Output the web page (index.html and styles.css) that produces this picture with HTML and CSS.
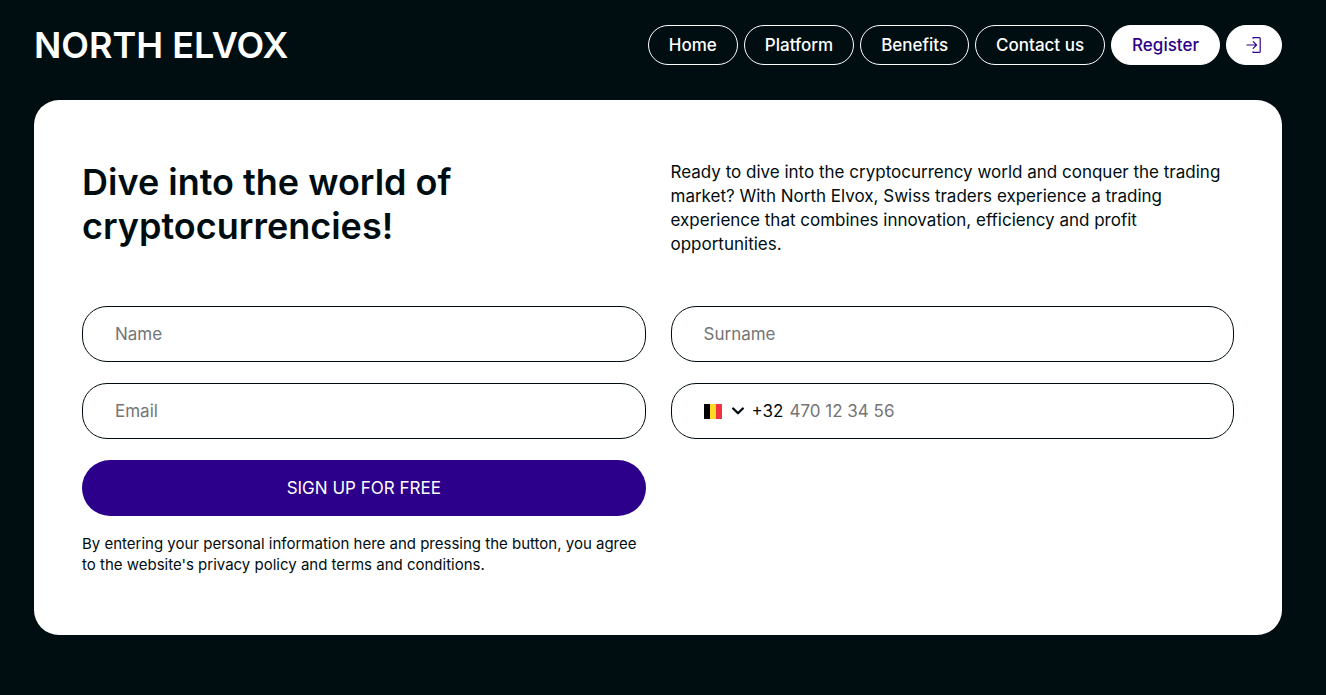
FILE: index.html
```html
<!DOCTYPE html>
<html lang="en">
<head>
  <meta charset="UTF-8">
  <meta name="viewport" content="width=device-width, initial-scale=1.0">
  <title>North Elvox</title>
  <link rel="stylesheet" href="styles.css">
</head>
<body>

  <header class="header">
    <a class="logo" href="#">NORTH ELVOX</a>
    <nav class="menu">
      <a class="menu-link" href="#">Home</a>
      <a class="menu-link" href="#platform">Platform</a>
      <a class="menu-link" href="#benefits">Benefits</a>
      <a class="menu-link" href="#contact">Contact us</a>
      <a class="menu-link filled" href="#register">Register</a>
      <a class="menu-link filled login" href="#login" aria-label="Log in">
        <svg width="16" height="16" viewBox="0 0 16 16" fill="none" stroke="currentColor" stroke-width="1.2" stroke-linecap="round" stroke-linejoin="round">
          <path d="M7 1.200V.6h6.200q1 0 1 1v12.800q0 1-1 1H7v-.6M1 8h9.500M7.200 4.700 10.500 8l-3.300 3.300"/>
        </svg>
      </a>
    </nav>
  </header>

  <main class="card" id="register">
    <div class="intro">
      <h1>Dive into the world of cryptocurrencies!</h1>
      <p>Ready to dive into the cryptocurrency world and conquer the trading market? With North Elvox, Swiss traders experience a trading experience that combines innovation, efficiency and profit opportunities.</p>
    </div>

    <form class="form">
      <input class="field" type="text" placeholder="Name" aria-label="Name">
      <input class="field" type="text" placeholder="Surname" aria-label="Surname">
      <input class="field" type="email" placeholder="Email" aria-label="Email">
      <div class="field phone">
        <button class="country" type="button" aria-label="Country: Belgium">
          <svg width="18" height="15" viewBox="0 0 18 15">
            <path fill="#000" d="M0 0h6v15H0z"/>
            <path fill="#fdda24" d="M6 0h6v15H6z"/>
            <path fill="#ef3340" d="M12 0h6v15h-6z"/>
          </svg>
          <svg width="12" height="8" viewBox="0 0 12 8" fill="none" stroke="#000d10" stroke-width="2.300" stroke-linecap="round" stroke-linejoin="round">
            <path d="M1.200 1.500 6 6.300l4.800-4.800"/>
          </svg>
        </button>
        <label for="phone">+32</label>
        <input type="tel" id="phone" placeholder="470 12 34 56">
      </div>
      <div class="send">
        <button class="submit" type="submit">SIGN UP FOR FREE</button>
        <p>By entering your personal information here and pressing the button, you agree to the website's privacy policy and terms and conditions.</p>
      </div>
    </form>
  </main>

</body>
</html>
```

FILE: styles.css
```css
* {
  box-sizing: border-box;
}

body {
  margin: 0;
  padding: 25px 44px 60px 34px;
  background-color: #000e11;
  color: #000d10;
  font-family: Inter, "Liberation Sans", sans-serif;
  font-size: 17px;
  line-height: 24px;
}

h1,
p {
  margin: 0;
}

/* Header */
.header {
  display: flex;
  align-items: center;
  justify-content: space-between;
  height: 40px;
  margin-bottom: 35px;
}

.logo {
  color: white;
  font-size: 36px;
  font-weight: 600;
  line-height: 40px;
  text-decoration: none;
}

.menu {
  display: flex;
  gap: 6px;
}

.menu-link {
  display: flex;
  align-items: center;
  height: 40px;
  padding: 0 20px;
  border: 1px solid white;
  border-radius: 20px;
  color: white;
  font-weight: 500;
  text-decoration: none;
}

.menu-link.filled {
  background-color: white;
  color: #2c008a;
}

.menu-link.login {
  padding: 0 19px;
}

/* Card */
.card {
  padding: 60px 48px;
  background-color: white;
  border-radius: 25px;
}

.intro,
.form {
  display: grid;
  grid-template-columns: 1fr 1fr;
  column-gap: 25px;
}

.intro {
  align-items: start;
  margin-bottom: 50px;
}

h1 {
  font-size: 36px;
  font-weight: 600;
  line-height: 44px;
}

/* Form */
.form {
  row-gap: 21px;
}

.field {
  width: 100%;
  height: 56px;
  padding: 0 32px;
  border: 1px solid #000d10;
  border-radius: 25px;
  background-color: white;
  color: #000d10;
  font: inherit;
}

input::placeholder {
  color: #757575;
  opacity: 1;
}

.phone {
  display: flex;
  align-items: center;
  gap: 6px;
}

.phone input {
  flex: 1;
  min-width: 0;
  padding: 0;
  border: none;
  outline: none;
  font: inherit;
}

.country {
  display: flex;
  align-items: center;
  gap: 10px;
  padding: 0 2px 0 0;
  border: none;
  background: none;
  cursor: pointer;
}

.submit {
  display: block;
  width: 100%;
  height: 56px;
  margin-bottom: 17px;
  border: none;
  border-radius: 28px;
  background-color: #2c008a;
  color: white;
  font: inherit;
  cursor: pointer;
}

.send p {
  font-size: 15px;
  line-height: 21px;
}
```
